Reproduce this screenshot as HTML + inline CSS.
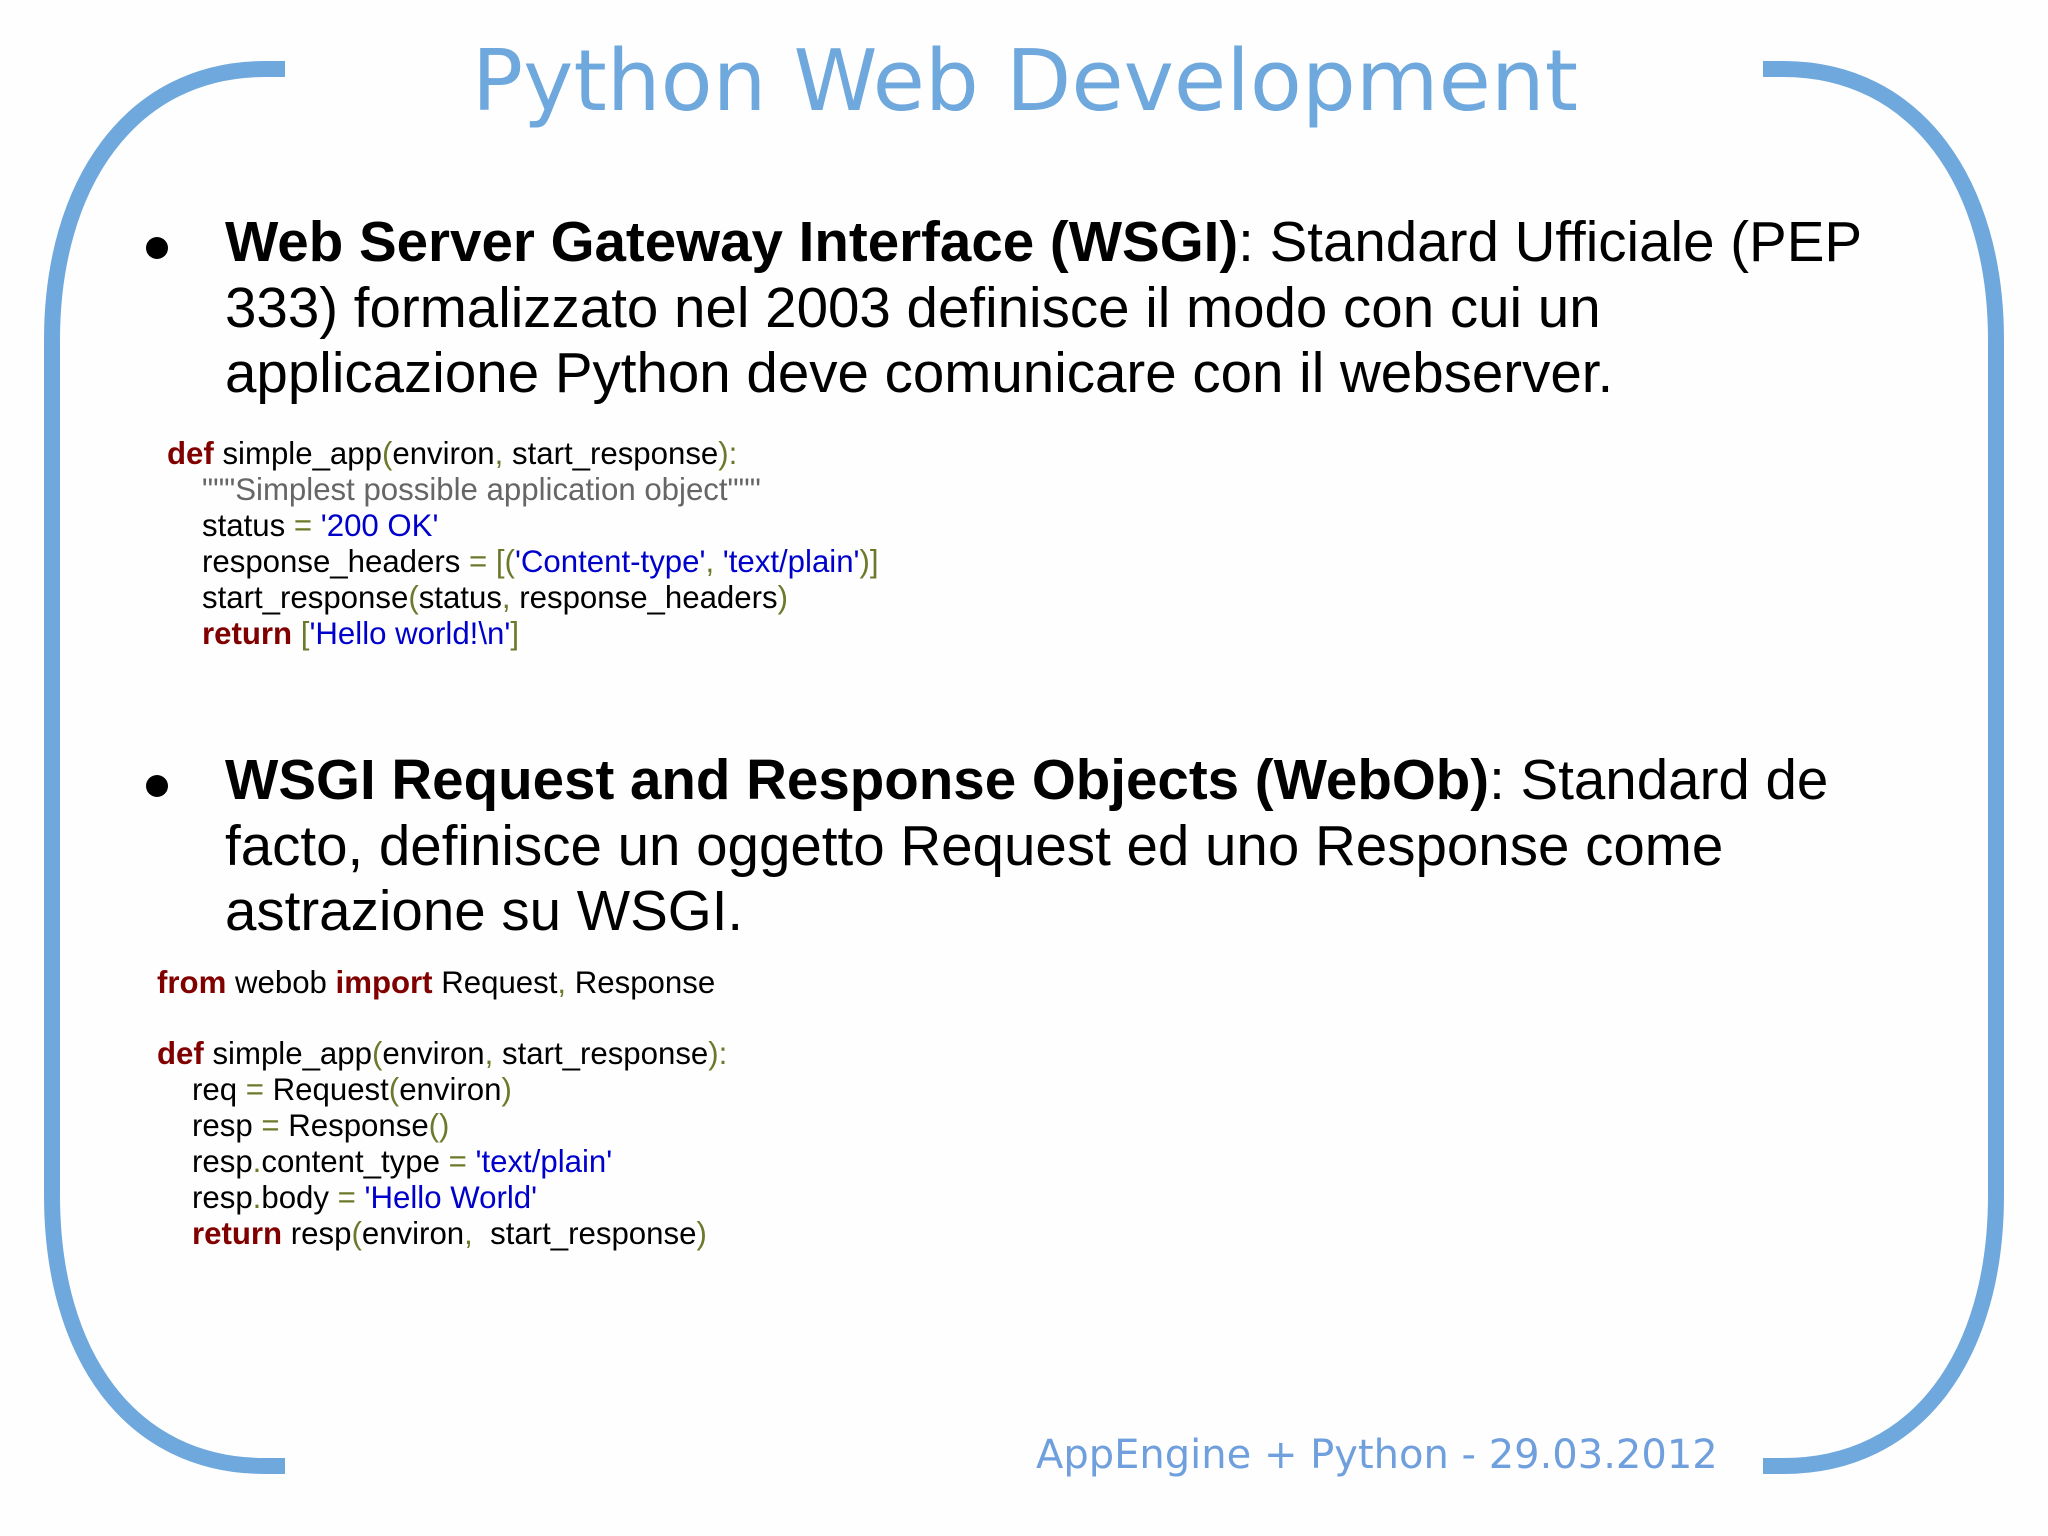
<!DOCTYPE html>
<html><head><meta charset="utf-8"><style>
html,body{margin:0;padding:0}
body{width:2048px;height:1536px;background:#fefefe;position:relative;overflow:hidden;font-family:"Liberation Sans",Arial,sans-serif}
.a{position:absolute;white-space:nowrap;line-height:1}
.t{font-family:"DejaVu Sans",sans-serif;color:#6fa8dc}
.b{font-size:56.5px;color:#000}
.c{font-size:31.2px;color:#000}
.k{color:#800000;font-weight:bold}
.p{color:#6b7a2a}
.s{color:#0000cc}
.g{color:#666}
.dot{position:absolute;width:22px;height:22px;border-radius:50%;background:#000}
</style></head><body>
<svg width="2048" height="1536" style="position:absolute;left:0;top:0">
<path d="M285,69 L265,69 C130,69 52,185 52,340 L52,1195 C52,1355 130,1466 265,1466 L285,1466" fill="none" stroke="#6fa8dc" stroke-width="16"/>
<path d="M1763,69 L1783,69 C1918,69 1996,185 1996,340 L1996,1195 C1996,1355 1918,1466 1783,1466 L1763,1466" fill="none" stroke="#6fa8dc" stroke-width="16"/>
</svg>
<div class="a t" style="left:0;width:2050px;text-align:center;top:39px;font-size:85px">Python Web Development</div>

<div class="dot" style="left:146px;top:237px"></div>
<div class="a b" style="left:225px;top:214px"><b>Web Server Gateway Interface (WSGI)</b>: Standard Ufficiale (PEP</div>
<div class="a b" style="left:225px;top:280px">333) formalizzato nel 2003 definisce il modo con cui un</div>
<div class="a b" style="left:225px;top:345px">applicazione Python deve comunicare con il webserver.</div>

<div class="a c" style="left:167px;top:438px"><span class="k">def</span> simple_app<span class="p">(</span>environ<span class="p">,</span> start_response<span class="p">):</span></div>
<div class="a c g" style="left:202px;top:474px">"""Simplest possible application object"""</div>
<div class="a c" style="left:202px;top:510px">status <span class="p">=</span> <span class="s">'200 OK'</span></div>
<div class="a c" style="left:202px;top:546px">response_headers <span class="p">= [(</span><span class="s">'Content-type'</span><span class="p">,</span> <span class="s">'text/plain'</span><span class="p">)]</span></div>
<div class="a c" style="left:202px;top:582px">start_response<span class="p">(</span>status<span class="p">,</span> response_headers<span class="p">)</span></div>
<div class="a c" style="left:202px;top:618px"><span class="k">return</span> <span class="p">[</span><span class="s">'Hello world!\n'</span><span class="p">]</span></div>

<div class="dot" style="left:146px;top:775px"></div>
<div class="a b" style="left:225px;top:752px"><b>WSGI Request and Response Objects (WebOb)</b>: Standard de</div>
<div class="a b" style="left:225px;top:818px">facto, definisce un oggetto Request ed uno Response come</div>
<div class="a b" style="left:225px;top:883px">astrazione su WSGI.</div>

<div class="a c" style="left:157px;top:967px"><span class="k">from</span> webob <span class="k">import</span> Request<span class="p">,</span> Response</div>
<div class="a c" style="left:157px;top:1038px"><span class="k">def</span> simple_app<span class="p">(</span>environ<span class="p">,</span> start_response<span class="p">):</span></div>
<div class="a c" style="left:192px;top:1074px">req <span class="p">=</span> Request<span class="p">(</span>environ<span class="p">)</span></div>
<div class="a c" style="left:192px;top:1110px">resp <span class="p">=</span> Response<span class="p">()</span></div>
<div class="a c" style="left:192px;top:1146px">resp<span class="p">.</span>content_type <span class="p">=</span> <span class="s">'text/plain'</span></div>
<div class="a c" style="left:192px;top:1182px">resp<span class="p">.</span>body <span class="p">=</span> <span class="s">'Hello World'</span></div>
<div class="a c" style="left:192px;top:1218px"><span class="k">return</span> resp<span class="p">(</span>environ<span class="p">,</span>&nbsp; start_response<span class="p">)</span></div>

<div class="a t" style="left:1036px;top:1435px;font-size:40px;color:#6f9fdd">AppEngine + Python - 29.03.2012</div>
</body></html>
